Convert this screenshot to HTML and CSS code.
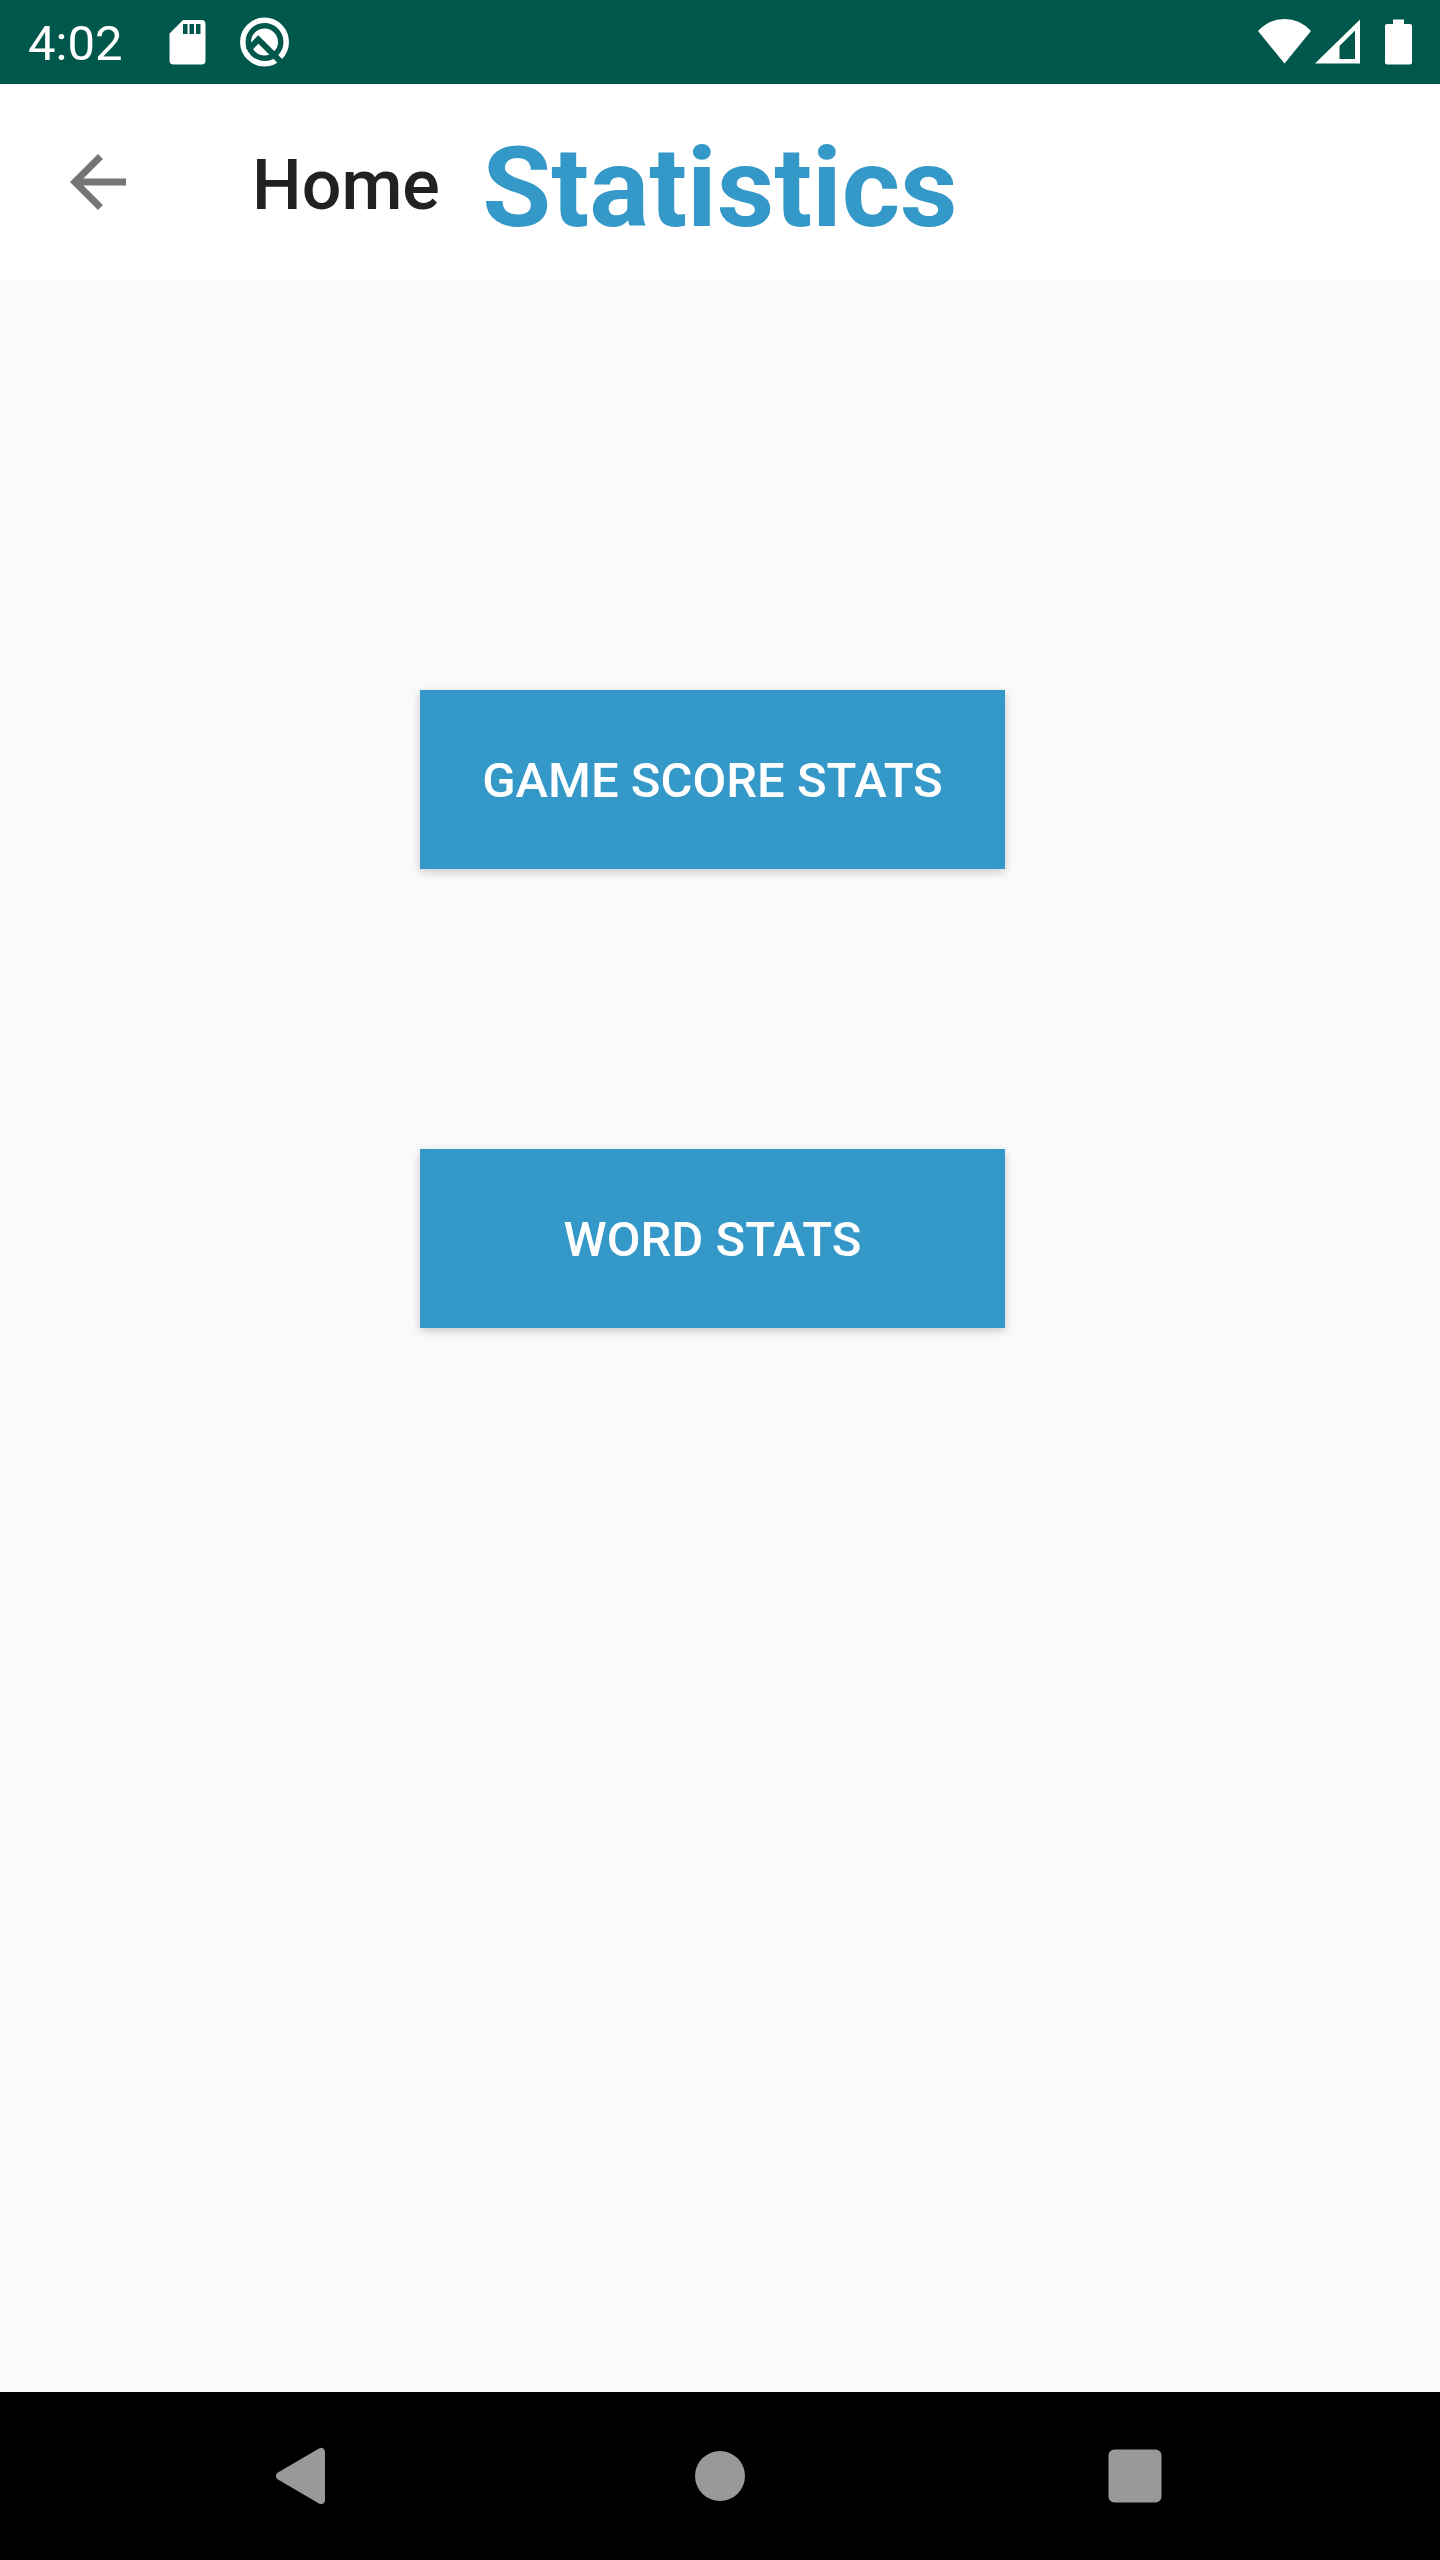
FILE: index.html
```html
<!DOCTYPE html>
<html lang="en">
<head>
  <meta charset="utf-8">
  <meta name="viewport" content="width=device-width, initial-scale=1">
  <title>Statistics</title>
  <link rel="stylesheet" href="styles.css">
</head>
<body>
  <div class="status-bar">
    <time class="clock">4:02</time>
    <div class="notifications">
      <svg class="notification-icon" viewBox="0 0 72 84" aria-hidden="true">
        <path fill="#fff" fill-rule="evenodd" d="M31 20H49.5a4 4 0 0 1 4 4V60.5a4 4 0 0 1-4 4H21.500a4 4 0 0 1-4-4V33.5ZM31 24V34H35.500V24ZM37.500 24V34H42V24ZM44 24V34H48.500V24Z"/>
      </svg>
      <svg class="notification-icon" viewBox="0 0 72 84" aria-hidden="true">
        <circle cx="36.500" cy="42" r="21.700" fill="none" stroke="#fff" stroke-width="5.500"/>
        <circle cx="36.500" cy="42" r="13.500" fill="#fff"/>
        <path d="M20 50 30.300 39.500 54 63.200" fill="none" stroke="#00574b" stroke-width="6"/>
      </svg>
    </div>
    <div class="system-icons">
      <svg class="wifi" viewBox="0 0 53 84" aria-hidden="true"><path fill="#fff" d="M0 31Q11 19 26.500 19T53 31L26.500 63.500Z"/></svg>
      <svg class="signal" viewBox="0 0 45 84" aria-hidden="true"><path fill="#fff" fill-rule="evenodd" d="M0 63.500 45 19.500V63.500ZM24.500 46V59H40V30.500Z"/></svg>
      <svg class="battery" viewBox="0 0 27 84" aria-hidden="true"><path fill="#fff" d="M8 19.500H19V24H25a2 2 0 0 1 2 2V62.500a2 2 0 0 1-2 2H2a2 2 0 0 1-2-2V26a2 2 0 0 1 2-2H8Z"/></svg>
    </div>
  </div>

  <header class="app-bar">
    <div class="app-bar-start">
      <button class="up-button" type="button" aria-label="Navigate up">
        <svg class="up-icon" viewBox="0 0 24 24" aria-hidden="true"><path fill="#757575" d="M20 11H7.830l5.590-5.590L12 4l-8 8 8 8 1.410-1.410L7.830 13H20z"/></svg>
      </button>
      <span class="parent-title">Home</span>
    </div>
    <h1 class="page-title">Statistics</h1>
  </header>

  <main class="content">
    <button class="stat-button" type="button">GAME SCORE STATS</button>
    <button class="stat-button" type="button">WORD STATS</button>
  </main>

  <nav class="nav-bar" aria-label="System navigation">
    <button class="nav-button" type="button" aria-label="Back">
      <svg class="nav-icon" viewBox="0 0 84 84" aria-hidden="true"><path fill="#999" stroke="#999" stroke-width="8" stroke-linejoin="round" d="M58 18V66L17 42Z"/></svg>
    </button>
    <button class="nav-button" type="button" aria-label="Home">
      <svg class="nav-icon" viewBox="0 0 84 84" aria-hidden="true"><circle cx="42" cy="42" r="25" fill="#999"/></svg>
    </button>
    <button class="nav-button" type="button" aria-label="Overview">
      <svg class="nav-icon" viewBox="0 0 84 84" aria-hidden="true"><rect x="15.500" y="15.500" width="53" height="53" rx="6" fill="#999"/></svg>
    </button>
  </nav>
</body>
</html>
```
FILE: styles.css
```css
* {
  box-sizing: border-box;
}

body {
  margin: 0;
  min-height: 100vh;
  display: flex;
  flex-direction: column;
  background: #fafafa;
  font-family: Roboto, "Liberation Sans", sans-serif;
}

button {
  margin: 0;
  padding: 0;
  border: 0;
  background: none;
  font: inherit;
  cursor: pointer;
}

svg {
  display: block;
}

.status-bar {
  display: flex;
  align-items: center;
  height: 84px;
  padding: 0 28px;
  background: #00574b;
  color: #fff;
}

.clock {
  padding-top: 4px;
  font-size: 49px;
  line-height: 56px;
}

.notifications {
  display: flex;
  gap: 4px;
  margin-left: 30px;
}

.notification-icon {
  width: 72px;
  height: 84px;
}

.system-icons {
  display: flex;
  margin-left: auto;
}

.wifi {
  width: 53px;
  height: 84px;
}

.signal {
  width: 45px;
  height: 84px;
  margin: 0 25px 0 4px;
}

.battery {
  width: 27px;
  height: 84px;
}

.app-bar {
  display: grid;
  grid-template-columns: 1fr auto 1fr;
  align-items: center;
  height: 196px;
  background: #fff;
}

.app-bar-start {
  display: flex;
  align-items: center;
  gap: 56px;
}

.up-button {
  display: grid;
  place-items: center;
  width: 196px;
  height: 196px;
}

.up-icon {
  width: 84px;
  height: 84px;
}

.parent-title {
  padding-top: 6px;
  color: #212121;
  font-size: 70px;
  font-weight: 500;
  line-height: 84px;
}

.page-title {
  margin: 0;
  padding-top: 12px;
  color: #3498c8;
  font-size: 112px;
  font-weight: 700;
  line-height: 132px;
}

.content {
  flex: 1;
  display: flex;
  flex-direction: column;
  align-items: center;
  gap: 280px;
  padding: 410px 15px 140px 0;
}

.stat-button {
  width: 585px;
  max-width: 100%;
  padding: 63px 28px 60px;
  background: #3498c8;
  box-shadow: 0 3px 9px rgba(0, 0, 0, 0.2);
  color: #fff;
  font-size: 49px;
  font-weight: 500;
  line-height: 56px;
}

.nav-bar {
  display: grid;
  grid-template-columns: repeat(3, 1fr);
  height: 168px;
  padding: 0 98px;
  background: #000;
}

.nav-button {
  display: grid;
  place-items: center;
}

.nav-icon {
  width: 84px;
  height: 84px;
}
```
